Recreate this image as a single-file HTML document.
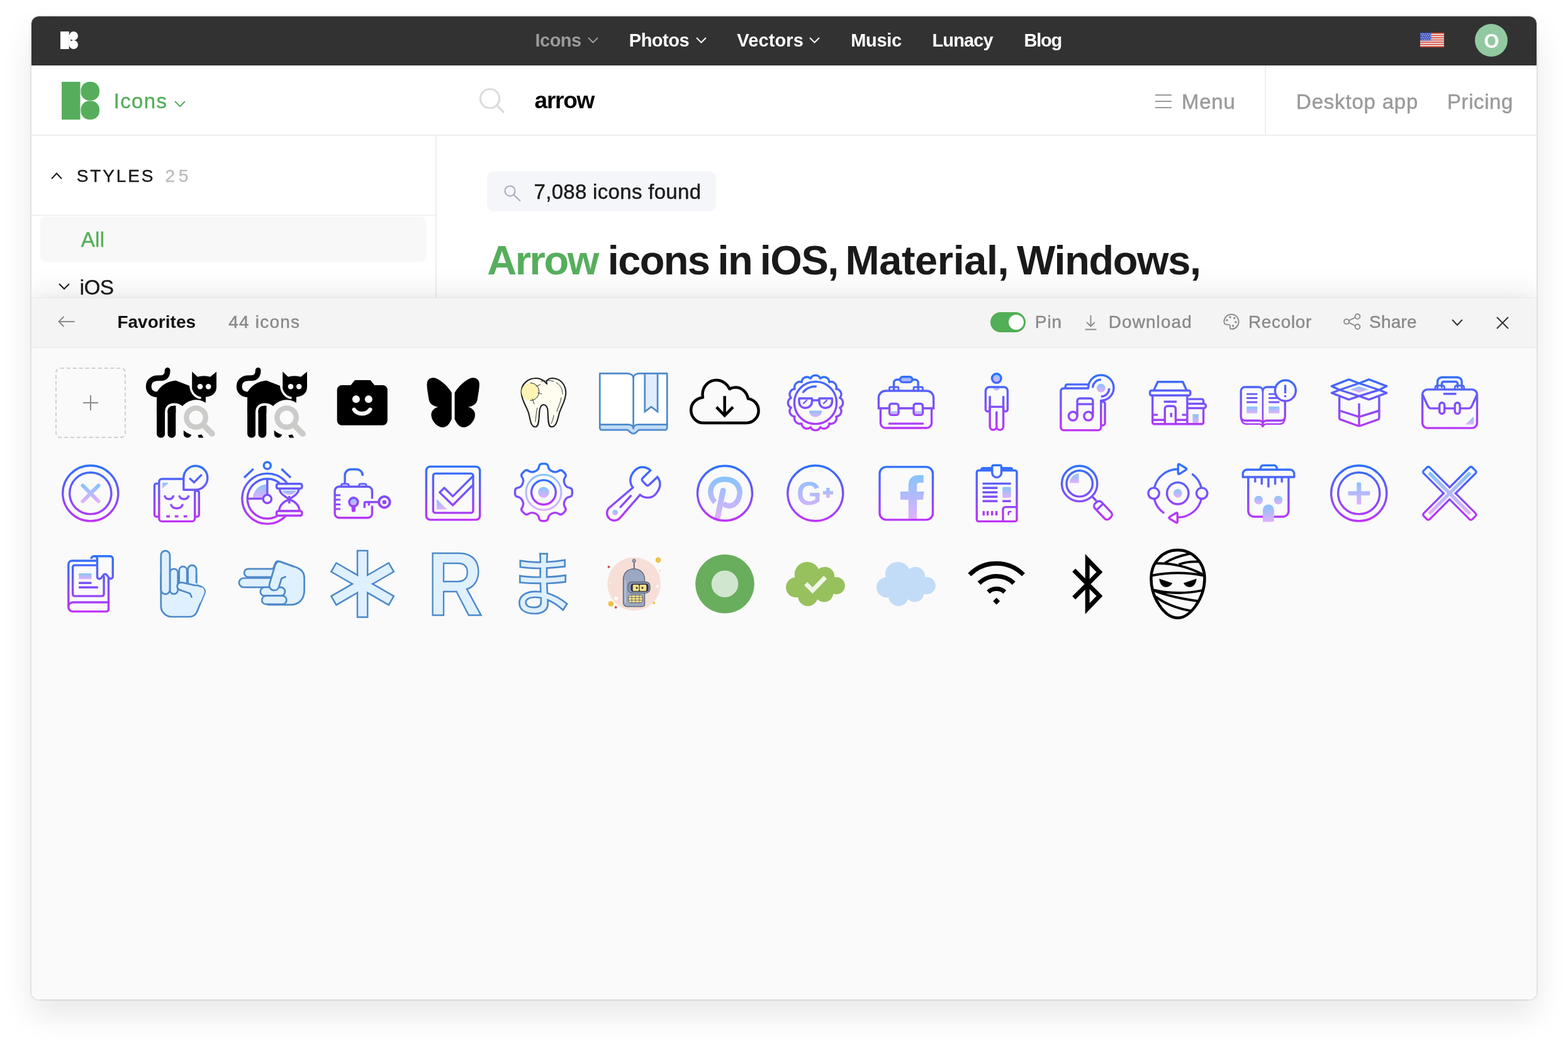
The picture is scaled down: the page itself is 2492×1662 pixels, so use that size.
<!DOCTYPE html>
<html lang="en">
<head>
<meta charset="utf-8">
<title>Arrow icons - Favorites</title>
<style>
html,body{margin:0;padding:0;background:#fff;}
body{width:2492px;height:1662px;position:relative;overflow:hidden;font-family:"Liberation Sans",sans-serif;}
#win{will-change:transform;position:absolute;left:50px;top:26px;width:2392px;height:1562px;border-radius:12px;background:#fff;overflow:hidden;}
#winshadow{position:absolute;left:50px;top:26px;width:2392px;height:1562px;border-radius:12px;box-shadow:0 0 0 2px rgba(0,0,0,.075),0 25px 50px rgba(0,0,0,.095);}
.abs{position:absolute;}
.t{position:absolute;line-height:1;white-space:nowrap;}
.n{-webkit-text-stroke:0.45px currentColor;}
#topbar{left:0;top:0;width:2392px;height:78px;background:#323232;}
#hdr{left:0;top:78px;width:2392px;height:110px;background:#fff;border-bottom:2px solid #eeeeee;}
#panel{left:0;top:447px;width:2392px;height:1115px;background:#fafafa;box-shadow:0 -8px 44px rgba(0,0,0,.085),0 -2px 10px rgba(0,0,0,.03);}
#ptool{left:0;top:0;width:2392px;height:77px;background:#f4f4f4;border-top:1px solid #ebebeb;border-bottom:2px solid #ebebeb;box-sizing:content-box;}
svg{position:absolute;overflow:visible;}
.ic{position:absolute;width:112px;height:112px;}
</style>
</head>
<body>
<div id="winshadow"></div>
<div id="win">
  <div id="topbar" class="abs"></div>
  <div id="hdr" class="abs"></div>
  <!-- sidebar / main divider -->
  <div class="abs" style="left:642px;top:190px;width:2px;height:260px;background:#efefef"></div>
  <!-- header vertical divider -->
  <div class="abs" style="left:1960px;top:78px;width:2px;height:110px;background:#efefef"></div>
  <!-- styles underline -->
  <div class="abs" style="left:0;top:315px;width:642px;height:2px;background:#f0f0f0"></div>
  <!-- All bg -->
  <div class="abs" style="left:14px;top:318px;width:614px;height:72px;border-radius:9px;background:#f7f8f7"></div>
  <!-- found pill -->
  <div class="abs" style="left:724px;top:246px;width:364px;height:64px;border-radius:12px;background:#f5f6fa"></div>

  <!-- small white logo -->
  <svg style="left:46px;top:24px" width="28" height="28" viewBox="0 0 60 60"><rect x="0" y="0" width="29.5" height="60" fill="#fff"/><circle cx="45" cy="15" r="15" fill="#fff"/><circle cx="45" cy="45" r="15" fill="#fff"/><rect x="29" y="12" width="6" height="36" fill="#fff"/></svg>
  <!-- big green logo -->
  <svg style="left:48px;top:104px" width="60" height="60" viewBox="0 0 60 60"><rect x="0" y="0" width="29.5" height="60" fill="#56ae5c"/><rect x="30.5" y="0" width="29.5" height="29.7" rx="13.5" fill="#56ae5c"/><rect x="30.5" y="30.3" width="29.5" height="29.7" rx="13.5" fill="#56ae5c"/></svg>

  <!-- chevrons in topbar -->
  <svg style="left:883.8px;top:33.3px" width="17" height="10" viewBox="0 0 17 10"><polyline points="1,1 8.5,8.5 16,1" fill="none" stroke="#9b9b9b" stroke-width="2"/></svg>
  <svg style="left:1055.6px;top:33.3px" width="17" height="10" viewBox="0 0 17 10"><polyline points="1,1 8.5,8.5 16,1" fill="none" stroke="#fff" stroke-width="2"/></svg>
  <svg style="left:1235.8px;top:33.3px" width="17" height="10" viewBox="0 0 17 10"><polyline points="1,1 8.5,8.5 16,1" fill="none" stroke="#fff" stroke-width="2"/></svg>
  <!-- green chevron -->
  <svg style="left:227.4px;top:134px" width="18" height="10" viewBox="0 0 18 10"><polyline points="1,1 9,9 17,1" fill="none" stroke="#56ae5c" stroke-width="2"/></svg>
  <!-- styles chevron up -->
  <svg style="left:31px;top:248px" width="18" height="11" viewBox="0 0 18 11"><polyline points="1,10 9,1.5 17,10" fill="none" stroke="#1a1a1a" stroke-width="2"/></svg>
  <!-- iOS chevron down -->
  <svg style="left:43px;top:424.3px" width="18" height="10" viewBox="0 0 18 10"><polyline points="1,1 9,9 17,1" fill="none" stroke="#1a1a1a" stroke-width="2"/></svg>

  <!-- flag -->
  <svg style="left:2207px;top:26px" width="38" height="23" viewBox="0 0 38 23">
    <rect width="38" height="23" fill="#ebebeb"/>
    <g fill="#dc4b3e"><rect y="0.00" width="38" height="1.77"/><rect y="3.54" width="38" height="1.77"/><rect y="7.08" width="38" height="1.77"/><rect y="10.62" width="38" height="1.77"/><rect y="14.15" width="38" height="1.77"/><rect y="17.69" width="38" height="1.77"/><rect y="21.23" width="38" height="1.77"/></g>
    <rect width="17.5" height="12.38" fill="#4a5bbf"/>
    <g fill="#dfe3f5"><circle cx="2.0" cy="2.0" r="0.7"/><circle cx="5.3" cy="2.0" r="0.7"/><circle cx="8.6" cy="2.0" r="0.7"/><circle cx="11.9" cy="2.0" r="0.7"/><circle cx="15.2" cy="2.0" r="0.7"/><circle cx="3.6" cy="4.8" r="0.7"/><circle cx="6.9" cy="4.8" r="0.7"/><circle cx="10.2" cy="4.8" r="0.7"/><circle cx="13.5" cy="4.8" r="0.7"/><circle cx="16.8" cy="4.8" r="0.7"/><circle cx="2.0" cy="7.6" r="0.7"/><circle cx="5.3" cy="7.6" r="0.7"/><circle cx="8.6" cy="7.6" r="0.7"/><circle cx="11.9" cy="7.6" r="0.7"/><circle cx="15.2" cy="7.6" r="0.7"/><circle cx="3.6" cy="10.4" r="0.7"/><circle cx="6.9" cy="10.4" r="0.7"/><circle cx="10.2" cy="10.4" r="0.7"/><circle cx="13.5" cy="10.4" r="0.7"/><circle cx="16.8" cy="10.4" r="0.7"/></g>
  </svg>
  <!-- avatar -->
  <div class="abs" style="left:2294px;top:12px;width:52px;height:52px;border-radius:50%;background:#92c9a1"></div>

  <!-- search icon (header) -->
  <svg style="left:710px;top:112px" width="44" height="44" viewBox="0 0 44 44"><circle cx="18.6" cy="18.6" r="15.1" fill="none" stroke="#dcdcdc" stroke-width="3.2"/><line x1="29.5" y1="29.5" x2="41" y2="41" stroke="#dcdcdc" stroke-width="3.2"/></svg>
  <!-- pill search icon -->
  <svg style="left:751px;top:268px" width="28" height="27" viewBox="0 0 28 27"><circle cx="9.5" cy="9.5" r="8" fill="none" stroke="#a5a9bb" stroke-width="2"/><line x1="15.2" y1="15.2" x2="26" y2="25.5" stroke="#a5a9bb" stroke-width="2"/></svg>
  <!-- hamburger -->
  <div class="abs" style="left:1786px;top:124px;width:26px;height:2px;background:#9a9a9a"></div>
  <div class="abs" style="left:1786px;top:134px;width:26px;height:2px;background:#9a9a9a"></div>
  <div class="abs" style="left:1786px;top:144px;width:26px;height:2px;background:#9a9a9a"></div>

  <div id="panel" class="abs">
    <div id="ptool" class="abs"></div>
    <!-- toolbar controls: coordinates relative to panel (page y - 473, page x - 50) -->
    <!-- back arrow -->
    <svg style="left:42px;top:29px" width="27" height="18" viewBox="0 0 27 18"><path d="M9.5,1 L1.5,9 L9.5,17 M1.5,9 H26.5" fill="none" stroke="#8a8a8a" stroke-width="2"/></svg>
    <!-- toggle -->
    <div class="abs" style="left:1524px;top:23px;width:56px;height:32px;border-radius:16px;background:#52ae57"></div>
    <div class="abs" style="left:1553px;top:27px;width:24px;height:24px;border-radius:50%;background:#fff"></div>
    <!-- download icon -->
    <svg style="left:1674px;top:28px" width="19" height="24" viewBox="0 0 19 24"><path d="M9.5,0 V17 M3,10.8 L9.5,17.3 L16,10.8 M0.5,22.5 H18.5" fill="none" stroke="#8a8a8a" stroke-width="1.9"/></svg>
    <!-- recolor (palette) icon -->
    <svg style="left:1894px;top:25px" width="26" height="26" viewBox="0 0 26 26"><path d="M13,1.500 C19.600,1.500 24.600,6.700 24.600,13.200 C24.600,19.800 19.600,24.800 13.500,24.800 C11.200,24.800 10.400,23.400 11,21.600 C11.700,19.400 10.400,17.600 8,17.600 L5.500,17.600 C2.800,17.600 1.400,15.800 1.400,13 C1.400,6.600 6.400,1.500 13,1.500 Z" fill="none" stroke="#8a8a8a" stroke-width="1.900"/><circle cx="5.900" cy="10.700" r="1.700" fill="#8a8a8a"/><circle cx="11" cy="5.900" r="1.700" fill="#8a8a8a"/><circle cx="17.700" cy="7.400" r="1.700" fill="#8a8a8a"/><circle cx="19.900" cy="13.800" r="1.700" fill="#8a8a8a"/><circle cx="15.700" cy="19.700" r="1.700" fill="#8a8a8a"/></svg>
    <!-- share icon -->
    <svg style="left:2084.8px;top:25px" width="28" height="26" viewBox="0 0 28 26"><g fill="none" stroke="#8a8a8a" stroke-width="1.9"><circle cx="5" cy="13" r="3.9"/><circle cx="22.5" cy="4.9" r="3.9"/><circle cx="22.5" cy="21.1" r="3.9"/><path d="M8.6,11.3 L19,6.5 M8.6,14.7 L19,19.5"/></g></svg>
    <!-- chevron -->
    <svg style="left:2257px;top:34px" width="18" height="11" viewBox="0 0 18 11"><polyline points="1,1 9,9.5 17,1" fill="none" stroke="#333" stroke-width="2"/></svg>
    <!-- close -->
    <svg style="left:2328px;top:29.5px" width="20" height="20" viewBox="0 0 20 20"><path d="M1,1 L19,19 M19,1 L1,19" fill="none" stroke="#333" stroke-width="2"/></svg>

    <!-- add box -->
    <div class="abs" style="left:38px;top:111px;width:108px;height:108px;border:2px dashed #cfcfcf;border-radius:8px;"></div>
    <div class="abs" style="left:82px;top:166px;width:24px;height:2px;background:#8a8a8a"></div>
    <div class="abs" style="left:93px;top:155px;width:2px;height:24px;background:#8a8a8a"></div>
<svg width="0" height="0" style="position:absolute"><defs><linearGradient id="g" gradientUnits="userSpaceOnUse" x1="0" y1="10" x2="0" y2="102"><stop offset="0" stop-color="#2a73fb"/><stop offset="1" stop-color="#c233f8"/></linearGradient><linearGradient id="go" x1="0" y1="0" x2="0" y2="1"><stop offset="0" stop-color="#2a73fb"/><stop offset="1" stop-color="#c233f8"/></linearGradient><linearGradient id="gl" x1="0" y1="0" x2="0" y2="1"><stop offset="0" stop-color="#86c4fb"/><stop offset="1" stop-color="#e2b0fb"/></linearGradient><linearGradient id="glu" gradientUnits="userSpaceOnUse" x1="0" y1="29" x2="0" y2="98"><stop offset="0" stop-color="#86c4fb"/><stop offset="1" stop-color="#e2b0fb"/></linearGradient></defs></svg>
<svg class="ic" style="left:182px;top:111px" viewBox="0 0 112 112"><path d="M34.200,4.300 C34.200,12 31,16.600 24.400,16.600 C21,16.600 19,16.600 17,16.800 C9,17.500 4.200,23 4.200,29.900 C4.200,37.500 9.500,42.800 18.500,42.800" fill="none" stroke="#000" stroke-width="8.700" stroke-linecap="round"/><path d="M17.100,72 V40 C20,33 28,25.500 38,22.500 C42,21.300 45,20.800 47.700,20.800 L68.500,28.700 L94.900,44 V55.700 L80,70 L57.500,63.500 L47.300,60 V72 Z" fill="#000"/><rect x="59.800" y="78" width="12.400" height="33.600" rx="6" fill="#000"/><path d="M81,104 L88.500,106.500 L91.400,111.500 H84 Z" fill="#000"/><circle cx="79.550" cy="79.550" r="28.200" fill="#fafafa"/><rect x="17.100" y="55" width="13.200" height="56.600" rx="6.600" fill="#000"/><path d="M32.250,112 V71 C32.250,62.500 37.500,58.600 45,58.600 C50.500,58.600 54.500,60.500 58,64" fill="none" stroke="#fafafa" stroke-width="4.300"/><path d="M34.500,105.300 V69.500 C34.500,64 38.500,60.800 44,60.800 H47.300 V105.300 a6.400,6.400 0 0 1 -12.800,0 Z" fill="#000"/><path d="M73.200,6.400 L82,14.800 Q92,11.800 102.200,14.800 L112,6.400 V31 C112,41 104,46.800 93,46.800 C82,46.800 73.200,40 73.200,30 Z" fill="#000"/><path d="M70.700,27 C70.700,39 78,47.300 87.500,48.400" fill="none" stroke="#fafafa" stroke-width="3.500"/><circle cx="86" cy="30.200" r="4.300" fill="#fafafa"/><circle cx="99.200" cy="30.200" r="4.300" fill="#fafafa"/><circle cx="79.550" cy="79.550" r="15.200" fill="none" stroke="#cbcbc9" stroke-width="8.400"/><path d="M92.800,92.800 L105.500,105.500" stroke="#cbcbc9" stroke-width="9.200" stroke-linecap="butt" fill="none"/><circle cx="105.200" cy="105.200" r="4.600" fill="#cbcbc9"/></svg>
<svg class="ic" style="left:326px;top:111px" viewBox="0 0 112 112"><path d="M34.200,4.300 C34.200,12 31,16.600 24.400,16.600 C21,16.600 19,16.600 17,16.800 C9,17.500 4.200,23 4.200,29.900 C4.200,37.500 9.500,42.800 18.500,42.800" fill="none" stroke="#000" stroke-width="8.700" stroke-linecap="round"/><path d="M17.100,72 V40 C20,33 28,25.500 38,22.500 C42,21.300 45,20.800 47.700,20.800 L68.500,28.700 L94.900,44 V55.700 L80,70 L57.500,63.500 L47.300,60 V72 Z" fill="#000"/><rect x="59.800" y="78" width="12.400" height="33.600" rx="6" fill="#000"/><path d="M81,104 L88.500,106.500 L91.400,111.500 H84 Z" fill="#000"/><circle cx="79.550" cy="79.550" r="28.200" fill="#fafafa"/><rect x="17.100" y="55" width="13.200" height="56.600" rx="6.600" fill="#000"/><path d="M32.250,112 V71 C32.250,62.500 37.500,58.600 45,58.600 C50.500,58.600 54.500,60.500 58,64" fill="none" stroke="#fafafa" stroke-width="4.300"/><path d="M34.500,105.300 V69.500 C34.500,64 38.500,60.800 44,60.800 H47.300 V105.300 a6.400,6.400 0 0 1 -12.800,0 Z" fill="#000"/><path d="M73.200,6.400 L82,14.800 Q92,11.800 102.200,14.800 L112,6.400 V31 C112,41 104,46.800 93,46.800 C82,46.800 73.200,40 73.200,30 Z" fill="#000"/><path d="M70.700,27 C70.700,39 78,47.300 87.500,48.400" fill="none" stroke="#fafafa" stroke-width="3.500"/><circle cx="86" cy="30.200" r="4.300" fill="#fafafa"/><circle cx="99.200" cy="30.200" r="4.300" fill="#fafafa"/><circle cx="79.550" cy="79.550" r="15.200" fill="none" stroke="#cbcbc9" stroke-width="8.400"/><path d="M92.800,92.800 L105.500,105.500" stroke="#cbcbc9" stroke-width="9.200" stroke-linecap="butt" fill="none"/><circle cx="105.200" cy="105.200" r="4.600" fill="#cbcbc9"/></svg>
<svg class="ic" style="left:470px;top:111px" viewBox="0 0 112 112"><path d="M23.200,28.100 H37.300 L44,20.100 H68.500 L75.300,28.100 H88.300 a7.500,7.500 0 0 1 7.500,7.500 V84.300 a7.500,7.500 0 0 1 -7.500,7.500 H23.200 a7.500,7.500 0 0 1 -7.500,-7.500 V35.600 a7.500,7.500 0 0 1 7.500,-7.500 Z" fill="#000"/><circle cx="45.900" cy="50.200" r="6" fill="#fafafa"/><circle cx="65.800" cy="50.200" r="6" fill="#fafafa"/><path d="M42.800,66.800 C48,75.300 63,75.300 68.300,66.800" fill="none" stroke="#fafafa" stroke-width="6.400" stroke-linecap="round"/></svg>
<svg class="ic" style="left:614px;top:111px" viewBox="0 0 112 112"><path d="M53.8,40 C50,33 40,22 30,17.5 C24,15 17,16.5 15,23 C13.5,28 16,40 17.5,50 C18.5,57 23,61 32.3,62.7 C25,64.5 20.5,70 21.5,77 C23,87 32,95 39.5,95 C46,95 50,90 53.8,82 Z" fill="#000"/><path d="M58.60 40.00 C62.40 33.00 72.40 22.00 82.40 17.50 C88.40 15.00 95.40 16.50 97.40 23.00 C98.90 28.00 96.40 40.00 94.90 50.00 C93.90 57.00 89.40 61.00 80.10 62.70 C87.40 64.50 91.90 70.00 90.90 77.00 C89.40 87.00 80.40 95.00 72.90 95.00 C66.40 95.00 62.40 90.00 58.60 82.00 Z" fill="#000"/></svg>
<svg class="ic" style="left:758px;top:111px" viewBox="0 0 112 112"><path d="M20.6,39 C20.6,26 31,17 44,17 C52,17 57,21 61.2,26 C59,21 63,17 70,17 C82,17 91.3,27 91.3,40 C91.3,52 84,62 81,72 C78,82 77,94.3 68.5,94.3 C61,94.3 64,72 62,65 C61,61 58,59 56.3,59 C54,59 51,61 50,66 C48,74 50,94.3 42.8,94.3 C35,94.3 35,82 32,72 C29,62 20.6,52 20.6,39 Z" fill="#fffdf0" stroke="#1f1f1f" stroke-width="2.1" stroke-linejoin="round"/><path d="M34.700,24.5 a14,14 0 1 1 -0.1,0 Z" fill="#fdf3b2"/><path d="M34.7,24.4 C42,24.4 48.7,30 48.7,38.4 C48.7,46 42,52.4 34.7,52.4" fill="none" stroke="#1f1f1f" stroke-width="1"/><path d="M44,30 L51,27 M47,40 L53,42 M38,50 L41,58 M52,22 C60,20 66,20 72,22 M76,24 C83,28 86,34 86,42 M84,48 C83,56 79,62 77,70 M46,64 C44,70 44,78 43,86 M72,76 C71,82 70,86 68,89" fill="none" stroke="#1f1f1f" stroke-width="0.9" stroke-linecap="round"/></svg>
<svg class="ic" style="left:902px;top:111px" viewBox="0 0 112 112"><path d="M1.3,90.6 H108.2 V96 a3.2,3.2 0 0 1 -3.2,3.2 H64 C61,99.2 60,105 54.6,105 C49,105 48,99.2 45,99.2 H4.500 a3.2,3.2 0 0 1 -3.2,-3.2 Z" fill="#c2dcf9" stroke="#4d89c9" stroke-width="2.700" stroke-linejoin="round"/><path d="M1.3,9.300 H44 C50,9.3 54.600,12 54.600,17 C54.600,12 59,9.3 65,9.3 H108.2 V90.6 H62 C58,90.6 54.6,93 54.6,97 C54.6,93 51,90.6 47,90.6 H1.3 Z" fill="#fff" stroke="#4d89c9" stroke-width="2.700" stroke-linejoin="round"/><line x1="54.6" y1="17" x2="54.6" y2="97" stroke="#4d89c9" stroke-width="2.700"/><path d="M72.800,9.300 H93.1 V70 L83,62.400 L72.800,70 Z" fill="#dfedfc" stroke="#4d89c9" stroke-width="2.700" stroke-linejoin="miter"/></svg>
<svg class="ic" style="left:1046px;top:111px" viewBox="0 0 112 112"><path d="M22,88.000 H90.5 C101,88 109.600,79 109.600,68.500 C109.600,58.5 102,50.500 93,49.500 C91,38 82,31.500 73,31.500 C69,31.500 66,32.500 63.500,34 C59,25 51,20 43,20 C30,20 20.500,30 20.500,43 C20.500,44.500 20.600,46 21,47.500 C10,49 2.200,57 2.200,67.500 C2.200,79 11,88 22,88 Z" fill="none" stroke="#000" stroke-width="4.500" stroke-linejoin="round"/><path d="M55.7,45.200 V75.500 M42.700,62.900 L55.700,76.300 L68.900,62.900" fill="none" stroke="#000" stroke-width="4.500"/></svg>
<svg class="ic" style="left:1190px;top:111px" viewBox="0 0 112 112"><path d="M48.29,17.26 A8.5,8.5 0 0 1 63.71,17.26 A8.5,8.5 0 0 1 77.95,23.16 A8.5,8.5 0 0 1 88.84,34.05 A8.5,8.5 0 0 1 94.74,48.29 A8.5,8.5 0 0 1 94.74,63.71 A8.5,8.5 0 0 1 88.84,77.95 A8.5,8.5 0 0 1 77.95,88.84 A8.5,8.5 0 0 1 63.71,94.74 A8.5,8.5 0 0 1 48.29,94.74 A8.5,8.5 0 0 1 34.05,88.84 A8.5,8.5 0 0 1 23.16,77.95 A8.5,8.5 0 0 1 17.26,63.71 A8.5,8.5 0 0 1 17.26,48.29 A8.5,8.5 0 0 1 23.16,34.05 A8.5,8.5 0 0 1 34.05,23.16 A8.5,8.5 0 0 1 48.29,17.26 Z" fill="none" stroke="url(#g)" stroke-width="3.4" stroke-linecap="round" stroke-linejoin="round"/><circle cx="56" cy="56" r="33.6" fill="none" stroke="url(#g)" stroke-width="3.4" stroke-linecap="round" stroke-linejoin="round"/><path d="M36.5,39 C41,33.500 48,30 56.500,30" fill="none" stroke="url(#g)" stroke-width="3.4" stroke-linecap="round" stroke-linejoin="round"/><path d="M30,49 H50.500 V54 C50.500,60 46,64.200 40,64.200 C34,64.200 30,60 30,54 Z" fill="none" stroke="url(#g)" stroke-width="3.4" stroke-linecap="round" stroke-linejoin="round"/><path d="M62,49 H82.500 V54 C82.500,60 78,64.200 72,64.200 C66,64.200 62,60 62,54 Z" fill="none" stroke="url(#g)" stroke-width="3.4" stroke-linecap="round" stroke-linejoin="round"/><path d="M50.500,52 H62" fill="none" stroke="url(#g)" stroke-width="3.4" stroke-linecap="round" stroke-linejoin="round"/><path d="M37,57 L42,52 M69,57 L74,52" fill="none" stroke="url(#g)" stroke-width="2.4" stroke-linecap="round" stroke-linejoin="round"/><path d="M45.900,68.500 H66.300 C66.300,74.500 62,78.600 56,78.600 C50,78.600 45.900,74.500 45.900,68.500 Z" fill="url(#gl)"/></svg>
<svg class="ic" style="left:1334px;top:111px" viewBox="0 0 112 112"><path d="M36.600,36 V24 a4.700,4.700 0 0 1 4.700,-4.700 H70.500 a4.700,4.700 0 0 1 4.700,4.700 V36" fill="none" stroke="url(#g)" stroke-width="3.4" stroke-linecap="round" stroke-linejoin="round"/><rect x="46.500" y="14.800" width="19.500" height="8.600" rx="4.300" fill="#a8b8fb" stroke="url(#g)" stroke-width="3.4"/><path d="M29.500,36 V33 a2,2 0 0 1 2,-2 H42 a2,2 0 0 1 2,2 V36 M68,36 V33 a2,2 0 0 1 2,-2 H80.500 a2,2 0 0 1 2,2 V36" fill="none" stroke="url(#g)" stroke-width="2.800" stroke-linecap="round" stroke-linejoin="round"/><path d="M12.400,64.800 V48 a11,11 0 0 1 11,-11 H88.700 a11,11 0 0 1 11,11 V64.800 Z" fill="none" stroke="url(#g)" stroke-width="3.4" stroke-linecap="round" stroke-linejoin="miter"/><path d="M15.400,64.800 V88 a8,8 0 0 0 8,8 H88.600 a8,8 0 0 0 8,-8 V64.800" fill="none" stroke="url(#g)" stroke-width="3.4" stroke-linecap="round" stroke-linejoin="round"/><rect x="29.600" y="57.500" width="14.400" height="17.800" rx="3.500" fill="#fafafa" stroke="url(#g)" stroke-width="3.4"/><rect x="68.100" y="57.500" width="14.400" height="17.800" rx="3.500" fill="#fafafa" stroke="url(#g)" stroke-width="3.4"/><rect x="31.500" y="69.500" width="10.600" height="4" fill="url(#gl)"/><rect x="70" y="69.500" width="10.600" height="4" fill="url(#gl)"/><path d="M28,89.100 H84" fill="none" stroke="url(#g)" stroke-width="3.4" stroke-linecap="butt" stroke-linejoin="round"/></svg>
<svg class="ic" style="left:1478px;top:111px" viewBox="0 0 112 112"><circle cx="55.800" cy="17.100" r="7.300" fill="url(#gl)" stroke="url(#g)" stroke-width="3.4"/><path d="M50.500,31.200 a5.300,5.300 0 0 0 10.600,0 Z" fill="url(#gl)"/><path d="M45.200,46.500 V66.500 a3.400,3.400 0 0 1 -6.800,0 V37 a6,6 0 0 1 6,-6 H67.400 a6,6 0 0 1 6,6 V66.500 a3.400,3.400 0 0 1 -6.800,0 V46.500" fill="none" stroke="url(#g)" stroke-width="3.4" stroke-linecap="round" stroke-linejoin="round"/><path d="M45.200,62.400 H66.600 M45.200,62.400 V93.700 a5.300,5.300 0 0 0 10.600,0 V71 M55.800,93.700 a5.400,5.400 0 0 0 10.800,0 V62.400" fill="none" stroke="url(#g)" stroke-width="3.4" stroke-linecap="round" stroke-linejoin="round"/></svg>
<svg class="ic" style="left:1622px;top:111px" viewBox="0 0 112 112"><path d="M79.500,54.500 H81.300 a2.800,2.800 0 0 1 2.800,2.800 V88 a4,4 0 0 1 -4,4 H79" fill="none" stroke="url(#g)" stroke-width="3.4" stroke-linecap="round" stroke-linejoin="round"/><path d="M21.300,32 V29.700 a2.800,2.800 0 0 1 2.800,-2.800 H56.500" fill="none" stroke="url(#g)" stroke-width="3.4" stroke-linecap="round" stroke-linejoin="round"/><path d="M57.600,33 H18.400 a4.500,4.500 0 0 0 -4.500,4.500 V95.100 a4.500,4.500 0 0 0 4.500,4.500 H73.300 a4.500,4.500 0 0 0 4.500,-4.500 V52.400" fill="none" stroke="url(#g)" stroke-width="3.4" stroke-linecap="round" stroke-linejoin="round"/><path d="M57.600,32.200 A20.200,20.200 0 1 1 77.800,52.400" fill="none" stroke="url(#g)" stroke-width="3.4" stroke-linecap="round" stroke-linejoin="round"/><circle cx="77.800" cy="32.600" r="6.900" fill="url(#gl)"/><path d="M64.800,32.200 a13,13 0 0 1 13,-13 M90.800,33 a13,13 0 0 1 -13,13" fill="none" stroke="url(#g)" stroke-width="3.4" stroke-linecap="butt" stroke-linejoin="round"/><circle cx="33.200" cy="77.100" r="6.900" fill="none" stroke="url(#g)" stroke-width="3.4" stroke-linecap="round" stroke-linejoin="round"/><circle cx="57.700" cy="77.100" r="6.900" fill="none" stroke="url(#g)" stroke-width="3.4" stroke-linecap="round" stroke-linejoin="round"/><path d="M40.100,77 V53 a4,4 0 0 1 4,-4 H60.900 a4,4 0 0 1 4,4 V77 M40.100,58.100 H64.900" fill="none" stroke="url(#g)" stroke-width="3.4" stroke-linecap="round" stroke-linejoin="round"/></svg>
<svg class="ic" style="left:1766px;top:111px" viewBox="0 0 112 112"><path d="M17.500,36.500 L24,22.700 H63.800 L70,36.500" fill="none" stroke="url(#g)" stroke-width="3.4" stroke-linecap="round" stroke-linejoin="round"/><rect x="11.600" y="36.500" width="64.200" height="7.800" rx="2.500" fill="none" stroke="url(#g)" stroke-width="3.4" stroke-linecap="round" stroke-linejoin="round"/><path d="M15.700,44.500 V87 a2.800,2.800 0 0 0 2.800,2.800 H70.900 V44.500" fill="none" stroke="url(#g)" stroke-width="3.4" stroke-linecap="round" stroke-linejoin="round"/><path d="M74,50.100 H94 a2.600,2.600 0 0 1 2.600,2.600 V57" fill="none" stroke="url(#g)" stroke-width="3.4" stroke-linecap="round" stroke-linejoin="round"/><path d="M72.500,57.500 H97 a2.500,2.500 0 0 1 0,7 H72.500" fill="none" stroke="url(#g)" stroke-width="3.4" stroke-linecap="round" stroke-linejoin="round"/><path d="M96.600,64.500 V87 a2.800,2.800 0 0 1 -2.800,2.800 H70.900" fill="none" stroke="url(#g)" stroke-width="3.4" stroke-linecap="round" stroke-linejoin="round"/><path d="M15.700,83.200 H35 M52.800,83.200 H70.900" fill="none" stroke="url(#g)" stroke-width="3.4" stroke-linecap="butt" stroke-linejoin="round"/><path d="M35.300,89.800 V65.500 a4.300,4.300 0 0 1 4.300,-4.300 H48.200 a4.300,4.300 0 0 1 4.300,4.300 V89.800" fill="none" stroke="url(#g)" stroke-width="3.4" stroke-linecap="round" stroke-linejoin="round"/><path d="M33.600,54.300 H54.200 M15.700,75.100 H24 M62.500,75.100 H70.900" fill="none" stroke="url(#g)" stroke-width="3.4" stroke-linecap="butt" stroke-linejoin="round"/><path d="M45.300,72 V78.800" fill="none" stroke="url(#g)" stroke-width="3.4" stroke-linecap="butt" stroke-linejoin="round"/><rect x="79.400" y="74" width="9.500" height="14" rx="1" fill="url(#gl)"/></svg>
<svg class="ic" style="left:1910px;top:111px" viewBox="0 0 112 112"><path d="M46.900,37 C46.900,33.500 44,31 40,31 H18.500 a6.300,6.300 0 0 0 -6.300,6.300 V78 a6.300,6.300 0 0 0 6.300,6.300 H41 C44,84.300 46.900,86.500 46.900,89 C46.900,86.500 50,84.300 53,84.300 H76 a6.300,6.300 0 0 0 6.300,-6.300 V37.300 a6.300,6.300 0 0 0 -6.300,-6.300 H54 C50,31 46.900,33.500 46.900,37 Z" fill="none" stroke="url(#g)" stroke-width="3.4" stroke-linecap="round" stroke-linejoin="round"/><path d="M46.900,37 V92.500 M12.500,82 C13.500,87 16,89.800 21,89.800 H41 C44,89.800 45.500,91 46.900,93.800 C48.300,91 50,89.800 53,89.800 H74 C78.500,89.800 81,87 82,82" fill="none" stroke="url(#g)" stroke-width="2.600" stroke-linecap="round" stroke-linejoin="round"/><path d="M21.200,42.100 H38.300 M21.200,48.500 H38.300 M21.200,55 H38.300 M56.200,42.100 H73.400 M56.200,48.500 H73.400 M56.200,55 H73.400" fill="none" stroke="url(#g)" stroke-width="2.800" stroke-linecap="butt" stroke-linejoin="round"/><rect x="21.200" y="61.900" width="17.100" height="10.800" rx="1" fill="url(#gl)"/><rect x="56.200" y="61.900" width="17.200" height="10.800" rx="1" fill="url(#gl)"/><circle cx="82.900" cy="36.700" r="16.500" fill="#fafafa" stroke="url(#g)" stroke-width="3.4"/><path d="M82.600,27.500 V41" fill="none" stroke="url(#g)" stroke-width="3.4" stroke-linecap="butt" stroke-linejoin="round"/><rect x="81" y="43.800" width="3.200" height="3.200" fill="url(#g)"/></svg>
<svg class="ic" style="left:2054px;top:111px" viewBox="0 0 112 112"><path d="M56,25 L39.700,18.900 L12.400,29.600 L25,35.500 Z M56,25 L71.600,18.900 L99.800,29.600 L87.900,35.500 Z M25,35.500 L12.400,40.400 L39.700,50.800 L56,45.300 Z M87.900,35.500 L99.800,40.400 L71.600,50.800 L56,45.300 Z" fill="none" stroke="url(#g)" stroke-width="3.4" stroke-linecap="round" stroke-linejoin="round"/><path d="M41.600,34.800 L56,29.900 L71,34.800 L56,39.700 Z" fill="url(#gl)"/><path d="M24.600,47.500 V80 a3,3 0 0 0 2,2.700 L54,92.500 a6,6 0 0 0 4,0 L85.900,82.700 a3,3 0 0 0 2,-2.700 V47.500" fill="none" stroke="url(#g)" stroke-width="3.4" stroke-linecap="round" stroke-linejoin="round"/><path d="M56,57 V92.500 M25,68.500 L56,78.300 L87.900,68.500" fill="none" stroke="url(#g)" stroke-width="3.4" stroke-linecap="butt" stroke-linejoin="round"/></svg>
<svg class="ic" style="left:2198px;top:111px" viewBox="0 0 112 112"><path d="M36.600,32 V22.500 a7,7 0 0 1 7,-7 H68.200 a7,7 0 0 1 7,7 V32" fill="none" stroke="url(#g)" stroke-width="3.4" stroke-linecap="round" stroke-linejoin="round"/><path d="M43.400,31 V25.500 a3,3 0 0 1 3,-3 H65.500 a3,3 0 0 1 3,3 V31" fill="none" stroke="url(#g)" stroke-width="3.4" stroke-linecap="round" stroke-linejoin="round"/><path d="M33,34 V31.500 a2.800,2.800 0 0 1 2.800,-2.800 H44.800 a2.800,2.800 0 0 1 2.800,2.800 V34 M64.200,34 V31.500 a2.800,2.800 0 0 1 2.800,-2.800 H76 a2.800,2.800 0 0 1 2.800,2.800 V34" fill="none" stroke="url(#g)" stroke-width="2.800" stroke-linecap="round" stroke-linejoin="round"/><rect x="12.600" y="34.900" width="86.900" height="61.200" rx="8" fill="none" stroke="url(#g)" stroke-width="3.4" stroke-linecap="round" stroke-linejoin="round"/><path d="M12.700,42.800 L21.300,61.200 C22.500,63.700 24,64.900 27,64.900 H85.400 C88.400,64.900 90,63.700 91.100,61.200 L99.500,42.800" fill="none" stroke="url(#g)" stroke-width="3.4" stroke-linecap="round" stroke-linejoin="round"/><path d="M45.800,41.800 H66.600" fill="none" stroke="url(#g)" stroke-width="3.4" stroke-linecap="butt" stroke-linejoin="round"/><rect x="39.700" y="55.700" width="8" height="17.700" rx="4" fill="#fafafa" stroke="url(#g)" stroke-width="3.4"/><rect x="64.200" y="55.700" width="8" height="17.700" rx="4" fill="#fafafa" stroke="url(#g)" stroke-width="3.4"/><path d="M94.200,77.700 V88 a2.600,2.600 0 0 1 -2.600,2.600 H80.700 Z" fill="url(#gl)"/></svg>
<svg class="ic" style="left:38px;top:255px" viewBox="0 0 112 112"><circle cx="55.800" cy="55.800" r="44.100" fill="none" stroke="url(#g)" stroke-width="3.4" stroke-linecap="round" stroke-linejoin="round"/><circle cx="55.800" cy="55.800" r="33.100" fill="none" stroke="url(#g)" stroke-width="3.4" stroke-linecap="round" stroke-linejoin="round"/><path d="M43.500,43.500 L68.500,68.500 M68.500,43.500 L43.500,68.500" fill="none" stroke="url(#gl)" stroke-width="6" stroke-linecap="round"/></svg>
<svg class="ic" style="left:182px;top:255px" viewBox="0 0 112 112"><path d="M18,40.400 H16.300 a2.800,2.800 0 0 0 -2.800,2.800 V90 a3,3 0 0 0 3,3 H19 M80,52 H81.500 a2.800,2.800 0 0 1 2.800,2.800 V90 a3,3 0 0 1 -3,3 H79" fill="none" stroke="url(#g)" stroke-width="3.4" stroke-linecap="round" stroke-linejoin="round"/><rect x="20.800" y="33" width="56.900" height="67.400" rx="4.500" fill="none" stroke="url(#g)" stroke-width="3.4" stroke-linecap="round" stroke-linejoin="round"/><path d="M26.200,39.100 H36 L26.200,48.200 Z" fill="url(#gl)"/><path d="M59.800,50.200 V30.600 a19,19 0 1 1 19,19.600 Z" fill="#fafafa" stroke="url(#g)" stroke-width="3.4" stroke-linejoin="round"/><path d="M69.100,31.800 L76.400,38.400 L88.700,26.100" fill="none" stroke="url(#g)" stroke-width="3.4" stroke-linecap="butt" stroke-linejoin="miter"/><path d="M30,60.500 C32,66.500 41,66.500 43.400,60.500 M53.200,60.500 C55.500,66.500 65,66.500 67.500,60.500 M40,74.300 C43,81.500 55,81.500 58,74.300" fill="none" stroke="url(#g)" stroke-width="3.4" stroke-linecap="round" stroke-linejoin="round"/><path d="M32.300,92.500 H38 M45.800,92.500 H51.400 M59.800,92.500 H65.400" fill="none" stroke="url(#g)" stroke-width="3.4" stroke-linecap="butt" stroke-linejoin="round"/></svg>
<svg class="ic" style="left:326px;top:255px" viewBox="0 0 112 112"><circle cx="48.800" cy="64.400" r="40" fill="none" stroke="url(#g)" stroke-width="3.4" stroke-linecap="round" stroke-linejoin="round"/><circle cx="48.800" cy="64.400" r="31.600" fill="none" stroke="url(#g)" stroke-width="3.4" stroke-linecap="round" stroke-linejoin="round"/><circle cx="48.800" cy="11.700" r="5.500" fill="none" stroke="url(#g)" stroke-width="3.4" stroke-linecap="round" stroke-linejoin="round"/><path d="M12,31 L26.700,17.100 M71.300,17.100 L86,31" fill="none" stroke="url(#g)" stroke-width="3.4" stroke-linecap="butt" stroke-linejoin="round"/><path d="M47.200,64.400 H25.800 A23,23 0 0 1 47.200,41.400 Z" fill="url(#gl)"/><path d="M48.800,33 V57.500 M17,64.400 H41.500" fill="none" stroke="url(#g)" stroke-width="3.4" stroke-linecap="butt" stroke-linejoin="round"/><circle cx="48.800" cy="64.900" r="6.600" fill="#fafafa" stroke="url(#g)" stroke-width="3.4"/><path d="M67,48 H100.500 V84 H67 Z" fill="#fafafa"/><path d="M68.500,48.200 C68.500,58 78,60 83.800,66.100 C89.500,60 98.700,58 98.700,48.200 Z" fill="#fafafa" stroke="url(#g)" stroke-width="3.4" stroke-linejoin="round"/><path d="M72.500,51.500 H95 C93.500,55.500 89,58 83.800,58.300 C78.500,58 74,55.500 72.500,51.500 Z" fill="url(#gl)"/><path d="M67.600,84 C67.600,73 79,66.500 83.800,66.500 C88.600,66.500 100,73 100,84 Z" fill="#fafafa" stroke="url(#g)" stroke-width="3.4" stroke-linejoin="round"/><path d="M83.800,60 V72" fill="none" stroke="url(#g)" stroke-width="3.4" stroke-linecap="butt" stroke-linejoin="round"/><rect x="63.500" y="40.800" width="40.400" height="7.400" rx="2.500" fill="#fafafa" stroke="url(#g)" stroke-width="3.4"/><rect x="63.500" y="84" width="40.400" height="7.300" rx="2.500" fill="#fafafa" stroke="url(#g)" stroke-width="3.4"/></svg>
<svg class="ic" style="left:470px;top:255px" viewBox="0 0 112 112"><path d="M28.100,41 V27.300 a9.600,9.600 0 0 1 9.600,-9.600 H46.600 a9.700,9.700 0 0 1 9.700,9.700 V28" fill="none" stroke="url(#g)" stroke-width="3.4" stroke-linecap="butt" stroke-linejoin="round"/><path d="M22.400,45 V43.300 a2.500,2.500 0 0 1 2.500,-2.500 H31.700 a2.500,2.500 0 0 1 2.500,2.500 V45 M50.600,45 V43.300 a2.500,2.500 0 0 1 2.500,-2.500 H59.600 a2.500,2.500 0 0 1 2.500,2.500 V45" fill="none" stroke="url(#g)" stroke-width="2.800" stroke-linecap="round" stroke-linejoin="round"/><path d="M71.400,64.500 V52 a6.700,6.700 0 0 0 -6.700,-6.700 H18.800 a6.700,6.700 0 0 0 -6.700,6.700 V88 a6.700,6.700 0 0 0 6.700,6.700 H64.700 a6.700,6.700 0 0 0 6.700,-6.700 V75.500" fill="none" stroke="url(#g)" stroke-width="3.4" stroke-linecap="butt" stroke-linejoin="round"/><path d="M12.600,58.700 H21 M12.600,66.100 H21 M12.600,73.400 H21 M12.600,80.800 H21" fill="none" stroke="url(#g)" stroke-width="3" stroke-linecap="butt" stroke-linejoin="round"/><circle cx="41.900" cy="69.800" r="6.900" fill="url(#gl)" stroke="url(#g)" stroke-width="3.600"/><path d="M41.900,77.500 V82.500" fill="none" stroke="url(#g)" stroke-width="6.400" stroke-linecap="round" stroke-linejoin="round"/><circle cx="90.900" cy="69.800" r="8.700" fill="none" stroke="url(#g)" stroke-width="4" stroke-linecap="round" stroke-linejoin="round"/><circle cx="90.900" cy="69.800" r="3.400" fill="url(#g)"/><path d="M82,69.800 H61.300 a2,2 0 0 0 -2,2 V79 M66.300,69.800 V75.300" fill="none" stroke="url(#g)" stroke-width="3.4" stroke-linecap="butt" stroke-linejoin="miter"/></svg>
<svg class="ic" style="left:614px;top:255px" viewBox="0 0 112 112"><rect x="13.400" y="13.400" width="85.300" height="84.500" rx="6.500" fill="none" stroke="url(#g)" stroke-width="3.4" stroke-linecap="round" stroke-linejoin="round"/><rect x="24.400" y="24.400" width="63.600" height="62.500" rx="3.500" fill="none" stroke="url(#g)" stroke-width="3.4" stroke-linecap="round" stroke-linejoin="round"/><path d="M30,64.900 V81.500 H46.500 Z" fill="url(#gl)"/><path d="M88,42.300 L55.600,74.700 L34.800,54.400 L42.100,47.100 L55.600,60.600 L86.300,29.900" fill="none" stroke="url(#g)" stroke-width="3.4" stroke-linecap="round" stroke-linejoin="round"/></svg>
<svg class="ic" style="left:758px;top:255px" viewBox="0 0 112 112"><path d="M42.47,20.80 Q47.55,18.70 48.60,13.80 L48.77,13.01 Q49.65,8.90 53.85,8.90 L58.05,8.90 Q62.25,8.90 63.13,13.01 L63.30,13.80 Q64.35,18.70 69.43,20.80 L70.10,21.08 Q75.18,23.19 79.39,20.46 L80.07,20.02 Q83.60,17.74 86.57,20.71 L89.54,23.68 Q92.51,26.65 90.23,30.18 L89.79,30.86 Q87.06,35.07 89.17,40.15 L89.45,40.82 Q91.55,45.90 96.45,46.95 L97.24,47.12 Q101.35,48.00 101.35,52.20 L101.35,56.40 Q101.35,60.60 97.24,61.48 L96.45,61.65 Q91.55,62.70 89.45,67.78 L89.17,68.45 Q87.06,73.53 89.79,77.74 L90.23,78.42 Q92.51,81.95 89.54,84.92 L86.57,87.89 Q83.60,90.86 80.07,88.58 L79.39,88.14 Q75.18,85.41 70.10,87.52 L69.43,87.80 Q64.35,89.90 63.30,94.80 L63.13,95.59 Q62.25,99.70 58.05,99.70 L53.85,99.70 Q49.65,99.70 48.77,95.59 L48.60,94.80 Q47.55,89.90 42.47,87.80 L41.80,87.52 Q36.72,85.41 32.51,88.14 L31.83,88.58 Q28.30,90.86 25.33,87.89 L22.36,84.92 Q19.39,81.95 21.67,78.42 L22.11,77.74 Q24.84,73.53 22.73,68.45 L22.45,67.78 Q20.35,62.70 15.45,61.65 L14.66,61.48 Q10.55,60.60 10.55,56.40 L10.55,52.20 Q10.55,48.00 14.66,47.12 L15.45,46.95 Q20.35,45.90 22.45,40.82 L22.73,40.15 Q24.84,35.07 22.11,30.86 L21.67,30.18 Q19.39,26.65 22.36,23.68 L25.33,20.71 Q28.30,17.74 31.83,20.02 L32.51,20.46 Q36.72,23.19 41.80,21.08 Z" fill="none" stroke="url(#g)" stroke-width="3.4" stroke-linecap="round" stroke-linejoin="round"/><circle cx="55.950" cy="54.300" r="28" fill="none" stroke="url(#gl)" stroke-width="3"/><circle cx="55.950" cy="54.300" r="19.400" fill="none" stroke="url(#go)" stroke-width="3.4"/><circle cx="55.950" cy="54.300" r="8.800" fill="url(#gl)"/></svg>
<svg class="ic" style="left:902px;top:255px" viewBox="0 0 112 112"><path d="M81.800,19.400 C76,14 65,11 57,19.500 C48,29 48,39 53.800,46.700 L17.500,77.700 A11.800,11.800 0 1 0 33.600,94.700 L65.300,58.200 C72,64 84,65 91,56 C98,47 99,38 92.800,29.900 L79.500,42.500 Q77.200,44.500 75,42.500 L69.300,36.700 Q67.300,34 69.300,31.700 Z" fill="none" stroke="url(#g)" stroke-width="3.4" stroke-linecap="round" stroke-linejoin="miter"/><path d="M51.500,58.800 L33.100,78.600" fill="none" stroke="url(#g)" stroke-width="3.4" stroke-linecap="butt" stroke-linejoin="round"/><circle cx="25.500" cy="86.400" r="4.500" fill="url(#gl)"/></svg>
<svg class="ic" style="left:1046px;top:255px" viewBox="0 0 112 112"><path d="M40.500,70 C28,58 31.500,33.500 56,33.500 C75.500,33.500 82.500,49 78.500,62 C74.500,76 61,79.500 53.500,71.500" fill="none" stroke="url(#glu)" stroke-width="8.400" stroke-linecap="butt"/><path d="M53.200,51.500 L44.200,95" fill="none" stroke="url(#glu)" stroke-width="9" stroke-linecap="round"/><circle cx="56" cy="55.800" r="43.500" fill="none" stroke="url(#g)" stroke-width="3.4" stroke-linecap="round" stroke-linejoin="round"/></svg>
<svg class="ic" style="left:1190px;top:255px" viewBox="0 0 112 112"><circle cx="55.800" cy="55.800" r="44" fill="none" stroke="url(#g)" stroke-width="3.4" stroke-linecap="round" stroke-linejoin="round"/><text x="26" y="74.200" font-family="Liberation Sans, sans-serif" font-weight="bold" font-size="51" fill="url(#gl)">G</text><path d="M73.200,47.200 H78.800 V52.300 H84 V57.800 H78.800 V62.900 H73.200 V57.800 H68 V52.300 H73.200 Z" fill="url(#gl)"/></svg>
<svg class="ic" style="left:1334px;top:255px" viewBox="0 0 112 112"><path d="M59.800,97.900 V66.100 H47 V53.100 H59.800 V43 C59.800,32 66,26.900 76,26.900 H83.800 V39.100 H78 C74.500,39.100 73.200,40.500 73.200,44 V53.100 H84.500 L83,66.100 H73.200 V97.900 Z" fill="url(#gl)"/><rect x="14" y="13.900" width="84.500" height="84" rx="10.500" fill="none" stroke="url(#g)" stroke-width="3.4" stroke-linecap="round" stroke-linejoin="round"/></svg>
<svg class="ic" style="left:1478px;top:255px" viewBox="0 0 112 112"><path d="M30.400,19.500 V18 a3.400,3.400 0 0 1 3.400,-3.400 H78.500 a3.400,3.400 0 0 1 3.400,3.400 V19.500 Z" fill="url(#g)" stroke="url(#g)" stroke-width="1"/><rect x="24.300" y="19.500" width="63.700" height="80.900" rx="3" fill="none" stroke="url(#g)" stroke-width="3.4" stroke-linecap="round" stroke-linejoin="round"/><path d="M48.800,13.500 a2.200,2.200 0 0 1 2.200,-2.200 H61.300 a2.200,2.200 0 0 1 2.200,2.200 V23.200 a7.350,7.350 0 0 1 -14.700,0 Z" fill="#fafafa" stroke="url(#g)" stroke-width="3.4"/><path d="M33.600,40.400 H78.700 M33.600,47.300 H57.400 M33.600,54.300 H57.400 M33.600,61.200 H57.400 M33.600,68.300 H57.400 M65.200,68.300 H78.700" fill="none" stroke="url(#g)" stroke-width="3.4" stroke-linecap="butt" stroke-linejoin="round"/><rect x="65.200" y="45.700" width="13.500" height="17.200" rx="2" fill="url(#gl)"/><path d="M35.300,84 V91 M41.700,84 V91 M48.700,84 V91 M55.600,84 V91" fill="none" stroke="url(#g)" stroke-width="3.400" stroke-linecap="butt" stroke-linejoin="round"/><path d="M66,100.400 V81.500 a3.900,3.900 0 0 1 3.900,-3.900 H88" fill="none" stroke="url(#g)" stroke-width="3.4" stroke-linecap="round" stroke-linejoin="round"/><path d="M74.700,90.500 V87 a2,2 0 0 1 2,-2 H79.500" fill="none" stroke="url(#g)" stroke-width="2.600" stroke-linecap="butt" stroke-linejoin="round"/></svg>
<svg class="ic" style="left:1622px;top:255px" viewBox="0 0 112 112"><circle cx="43.700" cy="40.400" r="28.200" fill="none" stroke="url(#g)" stroke-width="3.4" stroke-linecap="round" stroke-linejoin="round"/><circle cx="43.700" cy="40.400" r="20.700" fill="none" stroke="url(#g)" stroke-width="3.4" stroke-linecap="round" stroke-linejoin="round"/><path d="M42.700,39.400 H28 A15,15 0 0 1 42.700,24.400 Z" fill="url(#gl)"/><path d="M63.500,60.500 L70.500,68" fill="none" stroke="url(#g)" stroke-width="3.4" stroke-linecap="butt" stroke-linejoin="round"/><path d="M78.69,69.92 L93.83,85.88 A5.5,5.5 0 0 1 93.63,93.65 L91.16,95.99 A5.5,5.5 0 0 1 83.39,95.79 L68.24,79.83 A5.5,5.5 0 0 1 68.45,72.06 L70.91,69.72 A5.5,5.5 0 0 1 78.69,69.92 Z" fill="#fafafa" stroke="url(#g)" stroke-width="3.4"/><path d="M81.10,72.46 L70.65,82.37" fill="none" stroke="url(#g)" stroke-width="3.4" stroke-linecap="butt" stroke-linejoin="round"/></svg>
<svg class="ic" style="left:1766px;top:255px" viewBox="0 0 112 112"><path d="M18.600,47 A38.300,38.300 0 0 1 55.800,17.500 M78.300,24.800 A38.300,38.300 0 0 1 93.400,47.500 M93.300,64.800 A38.300,38.300 0 0 1 55.800,94.100 M34.200,87.400 A38.300,38.300 0 0 1 18.400,65" fill="none" stroke="url(#g)" stroke-width="3.4" stroke-linecap="butt" stroke-linejoin="round"/><circle cx="17.600" cy="55.800" r="8.700" fill="none" stroke="url(#g)" stroke-width="3.4" stroke-linecap="round" stroke-linejoin="round"/><circle cx="94.200" cy="55.800" r="8.700" fill="none" stroke="url(#g)" stroke-width="3.4" stroke-linecap="round" stroke-linejoin="round"/><circle cx="55.800" cy="55.800" r="17.200" fill="none" stroke="url(#g)" stroke-width="3.4" stroke-linecap="round" stroke-linejoin="round"/><circle cx="55.800" cy="55.800" r="6.900" fill="url(#gl)"/><path d="M58.86,9.87 Q56.30,8.30 56.30,11.30 L56.30,23.30 Q56.30,26.30 58.86,24.73 L68.44,18.87 Q71.00,17.30 68.44,15.73 Z" fill="none" stroke="url(#g)" stroke-width="3.4" stroke-linecap="round" stroke-linejoin="round"/><path d="M52.74,87.27 Q55.30,85.70 55.30,88.70 L55.30,100.70 Q55.30,103.70 52.74,102.13 L43.16,96.27 Q40.60,94.70 43.16,93.13 Z" fill="none" stroke="url(#g)" stroke-width="3.4" stroke-linecap="round" stroke-linejoin="round"/></svg>
<svg class="ic" style="left:1910px;top:255px" viewBox="0 0 112 112"><path d="M42.100,18.300 L44.500,13 a2.800,2.800 0 0 1 2.500,-1.600 H65.500 a2.800,2.800 0 0 1 2.500,1.600 L70.300,18.300" fill="none" stroke="url(#g)" stroke-width="3.4" stroke-linecap="round" stroke-linejoin="round"/><path d="M15.200,30 V25 a6.700,6.700 0 0 1 6.700,-6.700 H90.100 a6.700,6.700 0 0 1 6.700,6.700 V30 Z" fill="none" stroke="url(#g)" stroke-width="3.4" stroke-linecap="round" stroke-linejoin="round"/><path d="M23.800,30 V84 a9,9 0 0 0 9,9 H78.900 a9,9 0 0 0 9,-9 V30" fill="none" stroke="url(#g)" stroke-width="3.4" stroke-linecap="round" stroke-linejoin="round"/><path d="M34.800,30 V38.400 M45.300,30 V42 M55.900,30 V46.500 M66.600,30 V42 M77.200,30 V38.400" fill="none" stroke="url(#g)" stroke-width="3.4" stroke-linecap="butt" stroke-linejoin="round"/><circle cx="40.200" cy="66.600" r="6.900" fill="url(#gl)"/><circle cx="71.500" cy="66.600" r="6.900" fill="url(#gl)"/><path d="M47,101.300 V82.300 a8.900,8.900 0 0 1 17.800,0 V99.300 a2,2 0 0 1 -2,2 Z" fill="url(#gl)"/></svg>
<svg class="ic" style="left:2054px;top:255px" viewBox="0 0 112 112"><circle cx="55.700" cy="55.800" r="44.100" fill="none" stroke="url(#g)" stroke-width="3.4" stroke-linecap="round" stroke-linejoin="round"/><circle cx="55.700" cy="55.800" r="33.100" fill="none" stroke="url(#g)" stroke-width="3.4" stroke-linecap="round" stroke-linejoin="round"/><path d="M52.300,39.400 a1,1 0 0 1 1,-1 H58.200 a1,1 0 0 1 1,1 V52.400 H72.300 a1,1 0 0 1 1,1 V58.300 a1,1 0 0 1 -1,1 H59.200 V72.400 a1,1 0 0 1 -1,1 H53.300 a1,1 0 0 1 -1,-1 V59.300 H39.500 a1,1 0 0 1 -1,-1 V53.400 a1,1 0 0 1 1,-1 H52.300 Z" fill="url(#gl)"/></svg>
<svg class="ic" style="left:2198px;top:255px" viewBox="0 0 112 112"><path d="M24.10,14.68 L97.07,87.65 A3,3 0 0 1 97.07,91.89 L91.84,97.12 A3,3 0 0 1 87.60,97.12 L14.63,24.15 A3,3 0 0 1 14.63,19.91 L19.86,14.68 A3,3 0 0 1 24.10,14.68 Z" fill="#fafafa" stroke="url(#g)" stroke-width="3.4"/><path d="M14.63,87.65 L87.60,14.68 A3,3 0 0 1 91.84,14.68 L97.07,19.91 A3,3 0 0 1 97.07,24.15 L24.10,97.12 A3,3 0 0 1 19.86,97.12 L14.63,91.89 A3,3 0 0 1 14.63,87.65 Z" fill="#fafafa" stroke="url(#g)" stroke-width="3.4"/><path d="M23.04,16.02 L95.73,88.71 A1.5,1.5 0 0 1 95.73,90.83 L90.78,95.78 A1.5,1.5 0 0 1 88.66,95.78 L15.97,23.09 A1.5,1.5 0 0 1 15.97,20.97 L20.92,16.02 A1.5,1.5 0 0 1 23.04,16.02 Z" fill="#fafafa"/><path d="M23.300,23.300 L88.500,88.500 M88.500,23.300 L23.300,88.500" fill="none" stroke="url(#gl)" stroke-width="5.600"/></svg>
<svg class="ic" style="left:38px;top:399px" viewBox="0 0 112 112"><path d="M65,19 H26.500 a5.700,5.700 0 0 0 -5.700,5.700 V92 M84.500,48 V85" fill="none" stroke="url(#g)" stroke-width="3.4" stroke-linecap="round" stroke-linejoin="round"/><path d="M84.500,85 H28 a7.300,7.300 0 0 0 0,14.600 H81 a3.500,3.500 0 0 0 3.500,-3.500 Z" fill="none" stroke="url(#g)" stroke-width="3.4" stroke-linecap="round" stroke-linejoin="round"/><path d="M66,26.100 H30.600 a3,3 0 0 0 -3,3 V72.100 a3,3 0 0 0 3,3 H74.100 a3,3 0 0 0 3,-3 V44" fill="none" stroke="url(#g)" stroke-width="3.4" stroke-linecap="round" stroke-linejoin="round"/><rect x="37.200" y="39.100" width="20.300" height="9.100" rx="1" fill="url(#gl)"/><path d="M37.200,54.300 H57.500 M37.200,61.200 H67.800" fill="none" stroke="url(#g)" stroke-width="3.4" stroke-linecap="butt" stroke-linejoin="round"/><path d="M57,16 a4.300,4.300 0 0 1 4.300,-4.300 H87 a4.300,4.300 0 0 1 4.300,4.300 V44 a3.500,3.500 0 0 1 -6.500,1.700 L81.500,41.500 a3,3 0 0 0 -5,0 L73,46 a3.500,3.500 0 0 1 -6.500,-1.700 V16 a4.300,4.300 0 0 0 -4.300,-4.300" fill="#fafafa" stroke="url(#g)" stroke-width="3.4" stroke-linejoin="round"/></svg>
<svg class="ic" style="left:182px;top:399px" viewBox="0 0 112 112"><path d="M23.800,40 V91 a17,17 0 0 0 17,17 H69 a13,13 0 0 0 12,-8 L93,71 a8,8 0 0 0 -4.500,-10.500 L80.100,57.500 V40 Z" fill="#dff0fe" stroke="#4d89c9" stroke-width="2.700" stroke-linejoin="round" stroke-linecap="round"/><rect x="38" y="31.800" width="12.700" height="40" rx="6.300" fill="#dff0fe" stroke="#4d89c9" stroke-width="2.700" stroke-linejoin="round" stroke-linecap="round"/><rect x="52.700" y="28.100" width="12.500" height="40" rx="6.200" fill="#dff0fe" stroke="#4d89c9" stroke-width="2.700" stroke-linejoin="round" stroke-linecap="round"/><rect x="66.600" y="26.100" width="13.500" height="40" rx="6.700" fill="#dff0fe" stroke="#4d89c9" stroke-width="2.700" stroke-linejoin="round" stroke-linecap="round"/><path d="M52,54.500 H80.100 L89,61 C93,64 94,68 92,72 L86,86 H56 Z" fill="#dff0fe"/><path d="M80.100,57.500 L88.500,60.500" fill="none" stroke="#4d89c9" stroke-width="2.700"/><rect x="23.800" y="3.100" width="14.200" height="69" rx="7.100" fill="#dff0fe" stroke="#4d89c9" stroke-width="2.700" stroke-linejoin="round" stroke-linecap="round"/><path d="M58,53.800 C52,52.500 48.500,57 50,61.500 C51,64.500 54,65.500 57,66.500 L70,71 L72.500,76.500" fill="#dff0fe" stroke="#4d89c9" stroke-width="2.700" stroke-linejoin="round" stroke-linecap="round"/><path d="M58,53.800 L80,58.500" fill="none" stroke="#4d89c9" stroke-width="2.700"/></svg>
<svg class="ic" style="left:326px;top:399px" viewBox="0 0 112 112"><path d="M58.600,30 L62,22 C64,18.500 67,19.500 70,20.500 L95,29.500 C103,32.500 107.600,38 107.600,46 V66 C107.600,80 99,88.900 86,88.900 H50 Z" fill="#dff0fe" stroke="#4d89c9" stroke-width="2.700" stroke-linejoin="round" stroke-linecap="round"/><path d="M60,31.800 H18.600 a6.500,6.500 0 0 0 0,13 H60 Z" fill="#dff0fe" stroke="#4d89c9" stroke-width="2.700" stroke-linejoin="round" stroke-linecap="round"/><path d="M58,46.500 H11.300 a7.350,7.350 0 0 0 0,14.700 H58 Z" fill="#dff0fe" stroke="#4d89c9" stroke-width="2.700" stroke-linejoin="round" stroke-linecap="round"/><rect x="37.800" y="61.200" width="39.200" height="13.500" rx="6.700" fill="#dff0fe" stroke="#4d89c9" stroke-width="2.700" stroke-linejoin="round" stroke-linecap="round"/><rect x="40.200" y="74.700" width="39.200" height="13.400" rx="6.700" fill="#dff0fe" stroke="#4d89c9" stroke-width="2.700" stroke-linejoin="round" stroke-linecap="round"/><path d="M61.500,25 L52.500,55 C50.500,62 55,66 60,66 C64,66 66.500,63.500 67.500,60 L71.500,47 L77.500,44.500" fill="#dff0fe" stroke="#4d89c9" stroke-width="2.700" stroke-linejoin="round" stroke-linecap="round"/><path d="M62.500,24 C64,19.500 67,19.700 70,20.700 L90,28" fill="none" stroke="#4d89c9" stroke-width="2.700" stroke-linejoin="round" stroke-linecap="round"/></svg>
<svg class="ic" style="left:470px;top:399px" viewBox="0 0 112 112"><rect x="48.100" y="3.100" width="16" height="105.400" transform="rotate(0 56.100 55.800)" fill="#dff0fe" stroke="#4d89c9" stroke-width="2.7"/><rect x="48.100" y="3.100" width="16" height="105.400" transform="rotate(60 56.100 55.800)" fill="#dff0fe" stroke="#4d89c9" stroke-width="2.7"/><rect x="48.100" y="3.100" width="16" height="105.400" transform="rotate(-60 56.100 55.800)" fill="#dff0fe" stroke="#4d89c9" stroke-width="2.7"/><rect x="49.450" y="4.450" width="13.300" height="102.700" transform="rotate(0 56.100 55.800)" fill="#dff0fe"/><rect x="49.450" y="4.450" width="13.300" height="102.700" transform="rotate(60 56.100 55.800)" fill="#dff0fe"/><rect x="49.450" y="4.450" width="13.300" height="102.700" transform="rotate(-60 56.100 55.800)" fill="#dff0fe"/></svg>
<svg class="ic" style="left:614px;top:399px" viewBox="0 0 112 112"><text x="0" y="0" transform="translate(15.600,104.600) scale(0.850,1)" font-family="Liberation Sans, sans-serif" font-weight="bold" font-size="142.500" fill="#dff0fe" stroke="#4d89c9" stroke-width="2.700" stroke-linejoin="miter">R</text></svg>
<svg class="ic" style="left:758px;top:399px" viewBox="0 0 112 112"><text x="0" y="0" transform="translate(-1.600,96.700) scale(0.975,1)" font-family="Noto Sans CJK JP, Noto Sans CJK SC, sans-serif" font-size="111.500" font-weight="500" fill="#dff0fe" stroke="#4d89c9" stroke-width="2.700">ま</text></svg>
<svg class="ic" style="left:902px;top:399px" viewBox="0 0 112 112"><circle cx="55.700" cy="55.800" r="42.400" fill="#f7dfd8"/><circle cx="94.100" cy="17.800" r="4.400" fill="#f2c24a"/><circle cx="15.500" cy="28.800" r="2" fill="#d9504a"/><circle cx="18.900" cy="87.400" r="4.400" fill="#f2c24a"/><circle cx="26.700" cy="93" r="2" fill="#d9504a"/><circle cx="27.200" cy="78.800" r="2.900" fill="#fff"/><circle cx="92.900" cy="59.500" r="2.200" fill="#fff"/><circle cx="87.300" cy="85.900" r="2" fill="#f2c24a"/><circle cx="96.400" cy="34.700" r="1" fill="#f2c24a"/><circle cx="17.500" cy="53.500" r="1" fill="#fff"/><path d="M55.700,31.800 V21" stroke="#555b6b" stroke-width="1.800" fill="none"/><circle cx="55.700" cy="19" r="2.600" fill="#9aa7c2" stroke="#555b6b" stroke-width="0.9"/><path d="M38.500,49 C38.500,38 46,31.800 55.700,31.800 C65,31.800 72.600,38 72.600,49 V88 C72.600,90.500 71,91.800 68.500,91.800 H45 C41,91.800 38.500,89 38.500,86 Z" fill="#9ba8c3" stroke="#555b6b" stroke-width="1.200"/><path d="M42,50 V86" stroke="#c2cbdc" stroke-width="1.500" fill="none"/><rect x="45.900" y="52.600" width="35.200" height="17.600" rx="6.500" fill="#8a96b0" stroke="#555b6b" stroke-width="1.100"/><rect x="50.500" y="55.500" width="28" height="12.500" rx="4" fill="#2e2e33"/><rect x="53.700" y="57" width="9.800" height="10" rx="1.500" fill="#f6e08c"/><rect x="64.700" y="57" width="10.600" height="10" rx="1.500" fill="#f6e08c"/><circle cx="60" cy="62" r="1.500" fill="#222"/><circle cx="69" cy="62" r="1.500" fill="#222"/><rect x="46.400" y="73.400" width="23.200" height="12.300" rx="4.500" fill="#f6e08c" stroke="#555b6b" stroke-width="1"/><path d="M46.400,77.500 H69.600 M46.400,81.600 H69.600 M52,73.400 V85.700 M58,73.400 V85.700 M64,73.400 V85.700" stroke="#555b6b" stroke-width="0.800" fill="none"/></svg>
<svg class="ic" style="left:1046px;top:399px" viewBox="0 0 112 112"><circle cx="56" cy="55.800" r="46.800" fill="#69ae5d"/><circle cx="56" cy="55.800" r="21.300" fill="#d1e6cf"/></svg>
<svg class="ic" style="left:1190px;top:399px" viewBox="0 0 112 112"><g fill="#96c15d"><circle cx="42.800" cy="40.700" r="20"/><circle cx="71" cy="44" r="15.200"/><circle cx="25" cy="61.200" r="16"/><circle cx="89.300" cy="58.700" r="13.600"/><circle cx="44" cy="75" r="16"/><circle cx="69.800" cy="69.800" r="14.700"/><circle cx="55" cy="57.500" r="18"/></g><path d="M40.600,55.300 L51.400,66.300 L71.700,45.300" fill="none" stroke="#f0f6e8" stroke-width="7"/></svg>
<svg class="ic" style="left:1334px;top:399px" viewBox="0 0 112 112"><g fill="#c2dcf8"><circle cx="42.800" cy="40.700" r="20"/><circle cx="71" cy="44" r="15.200"/><circle cx="25" cy="61.200" r="16"/><circle cx="89.300" cy="58.700" r="13.600"/><circle cx="44" cy="75" r="16"/><circle cx="69.800" cy="69.800" r="14.700"/><circle cx="55" cy="57.500" r="18"/></g></svg>
<svg class="ic" style="left:1478px;top:399px" viewBox="0 0 112 112"><path d="M12.90,41.15 A60,60 0 0 1 98.50,41.15 M28.12,54.64 A39.7,39.7 0 0 1 83.28,54.64 M42.59,68.63 A19.6,19.6 0 0 1 68.81,68.63" fill="none" stroke="#000" stroke-width="7"/><path d="M55.700,77.700 L61.200,83.200 L55.700,88.700 L50.200,83.200 Z" fill="#000"/></svg>
<svg class="ic" style="left:1622px;top:399px" viewBox="0 0 112 112"><path d="M34.700,34 L75.500,75 L56.200,95 V17 L75.500,37 L34.700,78" fill="none" stroke="#000" stroke-width="7" stroke-linejoin="miter" stroke-miterlimit="10"/></svg>
<svg class="ic" style="left:1766px;top:399px" viewBox="0 0 112 112"><path d="M55.700,2.100 C80,2.100 98.500,22 98.500,47 C98.500,78 76,109.800 55.700,109.800 C35,109.800 13.400,78 13.400,47 C13.400,22 31,2.100 55.700,2.100 Z" fill="none" stroke="#000" stroke-width="4.500"/><path d="M20.800,23.200 C45,22.500 72,28.500 95,40.500 M35.500,22.500 C46,15.500 60,11 75.200,7.700 M57.500,25 C67,21 78,20 91,20.500 M15.200,42.300 Q55.700,34.500 96.700,42.300 M17,65.300 Q55.700,74.300 95,66 M18.900,66.700 C40,75 66,80 88.500,83.200 M20.800,76 C36,88 54,94.500 76.500,98.500" fill="none" stroke="#000" stroke-width="3.800"/><path d="M26.300,47.400 L47.200,54.400 C45,58.500 41,60.700 36.700,60.700 C31,60.700 27,55 26.300,47.400 Z M85.700,47.400 L64.900,54.400 C67,58.500 71,60.700 75.300,60.700 C81,60.700 85,55 85.700,47.400 Z" fill="#000"/></svg>
  </div>
<a class="t" style="left:800.5px;top:23.9px;font-size:29px;font-weight:bold;color:#9b9b9b;letter-spacing:-0.53px">Icons</a>
<a class="t" style="left:949.8px;top:23.9px;font-size:29px;font-weight:bold;color:#fff;letter-spacing:-0.51px">Photos</a>
<a class="t" style="left:1121.3px;top:23.9px;font-size:29px;font-weight:bold;color:#fff;letter-spacing:0.14px">Vectors</a>
<a class="t" style="left:1302.2px;top:23.9px;font-size:29px;font-weight:bold;color:#fff;letter-spacing:-0.34px">Music</a>
<a class="t" style="left:1431.5px;top:23.9px;font-size:29px;font-weight:bold;color:#fff;letter-spacing:-0.86px">Lunacy</a>
<a class="t" style="left:1577.6px;top:23.9px;font-size:29px;font-weight:bold;color:#fff;letter-spacing:-1.24px">Blog</a>
<span class="t" style="left:2308.6px;top:24.3px;font-size:31px;font-weight:bold;color:#fff;letter-spacing:0.00px">O</span>
<a class="t n" style="left:130.7px;top:117.8px;font-size:33px;font-weight:normal;color:#56ae5c;letter-spacing:1.36px">Icons</a>
<span class="t" style="left:799.6px;top:114.6px;font-size:37px;font-weight:bold;color:#000;letter-spacing:-1.24px">arrow</span>
<a class="t n" style="left:1828.0px;top:118.5px;font-size:33px;font-weight:normal;color:#9a9a9a;letter-spacing:0.73px">Menu</a>
<a class="t n" style="left:2010.0px;top:118.5px;font-size:33px;font-weight:normal;color:#9a9a9a;letter-spacing:0.81px">Desktop app</a>
<a class="t n" style="left:2250.0px;top:118.5px;font-size:33px;font-weight:normal;color:#9a9a9a;letter-spacing:0.58px">Pricing</a>
<span class="t n" style="left:71.7px;top:240.0px;font-size:28px;font-weight:normal;color:#1a1a1a;letter-spacing:2.86px">STYLES</span>
<span class="t n" style="left:212.4px;top:240.0px;font-size:28px;font-weight:normal;color:#bdbdbd;letter-spacing:5.83px">25</span>
<a class="t n" style="left:78.8px;top:338.1px;font-size:33px;font-weight:normal;color:#56ae5c;letter-spacing:0.28px">All</a>
<a class="t n" style="left:76.8px;top:413.5px;font-size:33px;font-weight:normal;color:#1a1a1a;letter-spacing:-0.40px">iOS</a>
<span class="t n" style="left:798.5px;top:262.0px;font-size:33px;font-weight:normal;color:#1a1a1a;letter-spacing:0.31px">7,088 icons found</span>
<strong class="t" style="left:136.4px;top:472.0px;font-size:28px;font-weight:bold;color:#111;letter-spacing:0.02px">Favorites</strong>
<span class="t n" style="left:313.3px;top:472.3px;font-size:28px;font-weight:normal;color:#8a8a8a;letter-spacing:1.20px">44 icons</span>
<label class="t n" style="left:1594.8px;top:472.3px;font-size:28px;font-weight:normal;color:#8a8a8a;letter-spacing:0.95px">Pin</label>
<span class="t n" style="left:1711.8px;top:472.3px;font-size:28px;font-weight:normal;color:#8a8a8a;letter-spacing:1.06px">Download</span>
<span class="t n" style="left:1934.0px;top:472.3px;font-size:28px;font-weight:normal;color:#8a8a8a;letter-spacing:0.64px">Recolor</span>
<span class="t n" style="left:2126.0px;top:472.3px;font-size:28px;font-weight:normal;color:#8a8a8a;letter-spacing:0.21px">Share</span>
<h1 style="margin:0;padding:0;font-size:inherit;font-weight:inherit"><span class="t" style="left:724.3px;top:354.7px;font-size:65px;font-weight:bold;color:#56ae5c;letter-spacing:-2.46px">Arrow</span> <span class="t" style="left:915.8px;top:354.7px;font-size:65px;font-weight:bold;color:#1a1a1a;letter-spacing:-1.65px">icons</span> <span class="t" style="left:1090.6px;top:354.7px;font-size:65px;font-weight:bold;color:#1a1a1a;letter-spacing:-1.56px">in</span> <span class="t" style="left:1157.8px;top:354.7px;font-size:65px;font-weight:bold;color:#1a1a1a;letter-spacing:-1.52px">iOS,</span> <span class="t" style="left:1293.6px;top:354.7px;font-size:65px;font-weight:bold;color:#1a1a1a;letter-spacing:-0.47px">Material,</span> <span class="t" style="left:1566.1px;top:354.7px;font-size:65px;font-weight:bold;color:#1a1a1a;letter-spacing:-1.39px">Windows,</span></h1>
</div>
</body>
</html>
